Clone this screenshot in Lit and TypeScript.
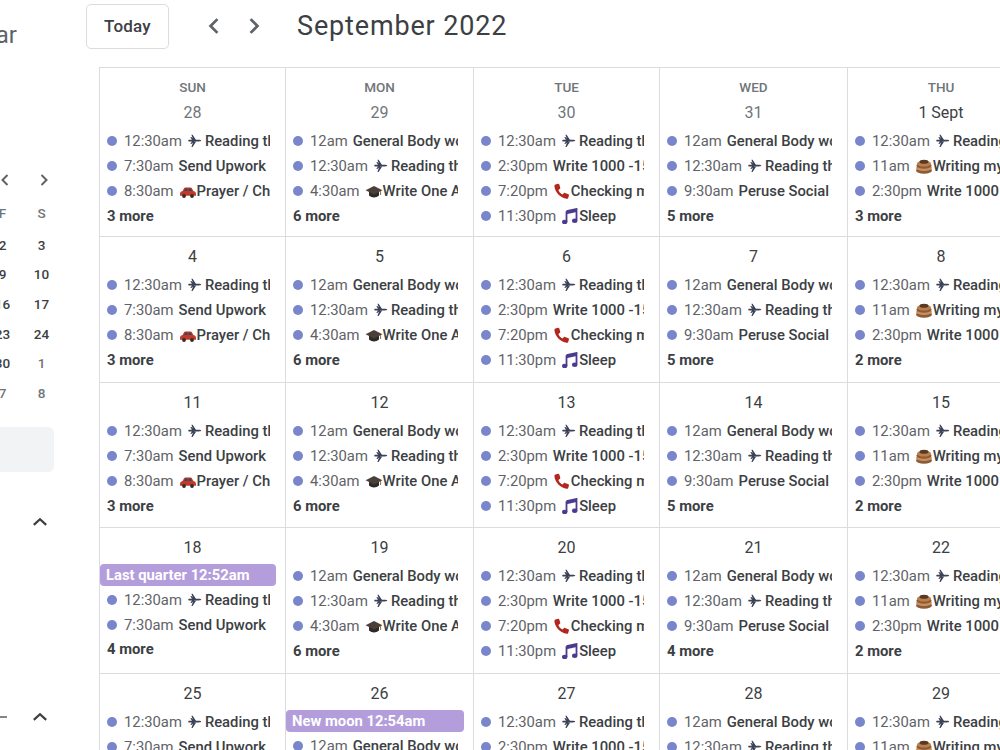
import { LitElement, html, css, svg } from "lit";
import { customElement } from "lit/decorators.js";

const icons: Record<string, any> = {
  plane: svg`<path d="M1 7.1h3.2L2.7 4.6h1l3 2.5H11c1.2 0 2.4.4 2.4.9s-1.2.9-2.4.9H6.7l-3 2.5h-1L4.2 8.9H1l-.4-.9z" transform="translate(0.6 -0.6) scale(1.02)" fill="#3c4257"/><path d="M6.4 7.3 4.4 1.8h1.2l3.6 5.5zM6.4 8.5 4.4 14h1.2l3.6-5.5z" fill="#3c4257"/>`,
  car: svg`<path d="M1 11.5c0-2 .8-3 2.6-3.4l1.6-3c.2-.4.6-.6 1-.6h5.4c.5 0 .9.2 1.1.6l1.7 3c1.8.4 2.6 1.4 2.6 3.4v1.2H1z" fill="#c0392b"/><path d="M5.2 8l1.2-2.5h2V8zM9.5 5.5h2.1L13 8H9.5z" fill="#34495e"/><circle cx="5" cy="13" r="1.9" fill="#2d2d2d"/><circle cx="13" cy="13" r="1.9" fill="#2d2d2d"/>`,
  cap: svg`<path d="M4 8.5v4c1.4 1.3 3.2 2 5 2s3.6-.7 5-2v-4z" fill="#2f2a26"/><path d="M9 3 .6 7.2 9 11.4l8.4-4.2z" fill="#4a4039"/><path d="M15.6 8v4" stroke="#8a6d3b" stroke-width="1"/>`,
  phone: svg`<path d="M2.4 1.6 5.2.8c.5-.1.9.1 1.1.6l1 3.3c.1.4 0 .8-.4 1L5.4 6.9c.7 2 2.2 3.7 4.2 4.6l1.4-1.4c.3-.3.7-.3 1-.2l3.4 1.3c.5.2.7.6.6 1.1l-.8 2.6c-.2.6-.8 1-1.5.9C7.500 15 1.800 9.300 1.400 3c0-.6.4-1.200 1-1.400z" fill="#b3261e"/>`,
  music: svg`<path d="M5.5 3.200 15.500 1v11.500" fill="none" stroke="#4b3a8f" stroke-width="1.800"/><path d="M5.500 3.200V14" fill="none" stroke="#4b3a8f" stroke-width="1.800"/><path d="M5.500 3.200 15.500 1v3L5.500 6.200z" fill="#4b3a8f"/><ellipse cx="3.700" cy="14" rx="2.700" ry="2.200" fill="#4b3a8f"/><ellipse cx="13.700" cy="12.800" rx="2.700" ry="2.200" fill="#4b3a8f"/>`,
  cake: svg`<ellipse cx="9" cy="12.500" rx="8" ry="3.300" fill="#8d5b3a"/><ellipse cx="9" cy="10" rx="8" ry="3" fill="#c9925c"/><ellipse cx="9" cy="7.700" rx="7.600" ry="3" fill="#8d5b3a"/><ellipse cx="9" cy="5.600" rx="7" ry="2.900" fill="#b97f4c"/><ellipse cx="9" cy="3.800" rx="4.500" ry="2" fill="#5b3822"/>`,
};

type Ev = { t: string; i?: string; n: string };
const R: Ev = { t: "12:30am", i: "plane", n: "Reading the Bible" };
const G: Ev = { t: "12am", n: "General Body workout" };
const U: Ev = { t: "7:30am", n: "Send Upwork proposals" };
const P: Ev = { t: "8:30am", i: "car", n: "Prayer / Church" };
const W: Ev = { t: "4:30am", i: "cap", n: "Write One Article" };
const K: Ev = { t: "2:30pm", n: "Write 1000 -1500 words" };
const C: Ev = { t: "7:20pm", i: "phone", n: "Checking messages" };
const S: Ev = { t: "11:30pm", i: "music", n: "Sleep" };
const O: Ev = { t: "9:30am", n: "Peruse Social Media" };
const B: Ev = { t: "11am", i: "cake", n: "Writing my book" };

const sun = [R, U, P], mon = [G, R, W], tue = [R, K, C, S], wed = [G, R, O], thu = [R, B, K];

type Cell = { d: string; evs: Ev[]; more?: number; chip?: string; head?: string; dim?: boolean };
const weeks: Cell[][] = [
  [
    { head: "SUN", d: "28", evs: sun, more: 3, dim: true },
    { head: "MON", d: "29", evs: mon, more: 6, dim: true },
    { head: "TUE", d: "30", evs: tue, dim: true },
    { head: "WED", d: "31", evs: wed, more: 5, dim: true },
    { head: "THU", d: "1 Sept", evs: thu, more: 3 },
  ],
  [
    { d: "4", evs: sun, more: 3 },
    { d: "5", evs: mon, more: 6 },
    { d: "6", evs: tue },
    { d: "7", evs: wed, more: 5 },
    { d: "8", evs: thu, more: 2 },
  ],
  [
    { d: "11", evs: sun, more: 3 },
    { d: "12", evs: mon, more: 6 },
    { d: "13", evs: tue },
    { d: "14", evs: wed, more: 5 },
    { d: "15", evs: thu, more: 2 },
  ],
  [
    { d: "18", chip: "Last quarter 12:52am", evs: [R, U], more: 4 },
    { d: "19", evs: mon, more: 6 },
    { d: "20", evs: tue },
    { d: "21", evs: wed, more: 4 },
    { d: "22", evs: thu, more: 2 },
  ],
  [
    { d: "25", evs: [R, U] },
    { d: "26", chip: "New moon 12:54am", evs: [G] },
    { d: "27", evs: [R, K] },
    { d: "28", evs: [G, R] },
    { d: "29", evs: [R, B] },
  ],
];

const mini = [["F", "S"], ["2", "3"], ["9", "10"], ["16", "17"], ["23", "24"], ["30", "1"], ["7", "8"]];

const chev = (d: string, cls = "chev") =>
  html`<svg class=${cls} viewBox="0 0 16 16"><path d=${d} fill="none" stroke="currentColor" stroke-width="2"/></svg>`;
const LEFT = "M10.500 3 5.500 8l5 5";
const RIGHT = "M5.500 3l5 5-5 5";
const UP = "M2.500 10.500 8 5.500l5.500 5";

@customElement("app-root")
export class AppRoot extends LitElement {
  static styles = css`
    :host { display: block; width: 1000px; height: 750px; overflow: hidden; background: #fff; font-family: Roboto, sans-serif; color: #3c4043; }
    .header { height: 67px; display: flex; align-items: center; box-sizing: border-box; padding-top: 0; }
    .brand { width: 17px; height: 40px; line-height: 40px; overflow: hidden; display: flex; justify-content: flex-end; font-size: 24px; color: #5f6368; flex: none; margin-top: 3px; }
    .today { margin-left: 69px; width: 83px; height: 45px; box-sizing: border-box; border: 1px solid #dadce0; border-radius: 5px; display: flex; align-items: center; justify-content: center; font-size: 17px; font-weight: 500; letter-spacing: 0.2px; color: #3c4043; flex: none; margin-top: -15px; }
    .nav { display: flex; gap: 18px; margin-left: 34px; color: #5f6368; margin-top: -15px; }
    .nav .chev { width: 22px; height: 22px; display: block; }
    .title { margin-left: 32px; font-size: 27px; color: #3c4043; letter-spacing: 0.85px; margin-top: -15px; white-space: nowrap; }
    .main { display: flex; height: 683px; }
    .side { width: 99px; flex: none; overflow: hidden; position: relative; color: #3c4043; }
    .mnav { display: grid; grid-template-columns: 39px 39px; margin: 105px 0 0 -15px; color: #5f6368; justify-items: center; }
    .mnav .chev { width: 16px; height: 16px; display: block; }
    .mini { display: grid; grid-template-columns: 39px 39px; grid-auto-rows: 29.700px; margin: 13px 0 0 -17px; font-size: 13.500px; font-weight: 500; text-align: center; line-height: 29.700px; }
    .mini span.dow { color: #70757a; font-weight: 500; }
    .mini span.off { color: #70757a; }
    .pill { height: 45px; width: 54px; margin-top: 18px; background: #f1f3f4; border-radius: 0 6px 6px 0; }
    .sect { display: flex; justify-content: flex-end; padding-right: 50px; color: #3c4043; margin-top: 41px; }
    .sect .chev { width: 18px; height: 18px; display: block; }
    .sect.second { margin-top: 177px; position: relative; }
    .dash { position: absolute; left: 0; top: 8px; width: 7px; height: 2px; background: #80868b; }
    .grid { flex: none; width: 901px; border-top: 1px solid #dadce0; display: grid; grid-template-columns: 186px 188px 186px 188px 187px; grid-template-rows: 169px 146px 145px 146px 145px; }
    .cell { border-left: 1px solid #dadce0; border-bottom: 1px solid #dadce0; box-sizing: border-box; padding-top: 7px; min-width: 0; overflow: hidden; }
    .dow, .date { height: 25px; line-height: 25px; text-align: center; }
    .head { height: 25px; line-height: 25px; text-align: center; font-size: 13.500px; font-weight: 500; color: #70757a; }
    .date { font-size: 16px; color: #3c4043; margin-bottom: 3.500px; }
    .date.dim { color: #70757a; }
    .ev { height: 25px; display: flex; align-items: center; margin-right: 15px; white-space: nowrap; overflow: hidden; font-size: 14.800px; }
    .dot { flex: none; width: 10px; height: 10px; border-radius: 50%; background: #7986cb; margin: 0 7px 0 7px; }
    .time { color: #5f6368; margin-right: 5px; flex: none; }
    .name { color: #3c4043; font-weight: 500; flex: none; }
    .ico { width: 18px; height: 16px; flex: none; display: block; }
    .more { height: 25px; line-height: 25px; font-size: 14.800px; font-weight: 700; padding-left: 7px; color: #3c4043; }
    .chip { height: 22px; line-height: 22px; margin: 1.500px 9px 1.500px 0; background: #b39ddb; border-radius: 4px; color: #fff; font-size: 14.800px; font-weight: 700; padding-left: 6px; white-space: nowrap; overflow: hidden; }
  `;

  renderCell(c: Cell) {
    return html`<div class="cell">
      ${c.head ? html`<div class="head">${c.head}</div>` : ""}
      <div class="date ${c.dim ? "dim" : ""}">${c.d}</div>
      ${c.chip ? html`<div class="chip">${c.chip}</div>` : ""}
      ${c.evs.map(
        (e) => html`<div class="ev"><span class="dot"></span><span class="time">${e.t}</span>${e.i
          ? html`<svg class="ico" viewBox="0 0 18 16">${icons[e.i]}</svg>`
          : ""}<span class="name">${e.n}</span></div>`
      )}
      ${c.more ? html`<div class="more">${c.more} more</div>` : ""}
    </div>`;
  }

  render() {
    return html`
      <div class="header">
        <div class="brand"><span>Calendar</span></div>
        <div class="today">Today</div>
        <div class="nav">${chev(LEFT)}${chev(RIGHT)}</div>
        <div class="title">September 2022</div>
      </div>
      <div class="main">
        <div class="side">
          <div class="mnav">${chev(LEFT)}${chev(RIGHT)}</div>
          <div class="mini">
            ${mini.map((r, i) =>
              r.map((v, j) => html`<span class=${i === 0 ? "dow" : i === 5 && j === 1 || i === 6 ? "off" : ""}>${v}</span>`)
            )}
          </div>
          <div class="pill"></div>
          <div class="sect">${chev(UP)}</div>
          <div class="sect second"><span class="dash"></span>${chev(UP)}</div>
        </div>
        <div class="grid">${weeks.map((w) => w.map((c) => this.renderCell(c)))}</div>
      </div>
    `;
  }
}
